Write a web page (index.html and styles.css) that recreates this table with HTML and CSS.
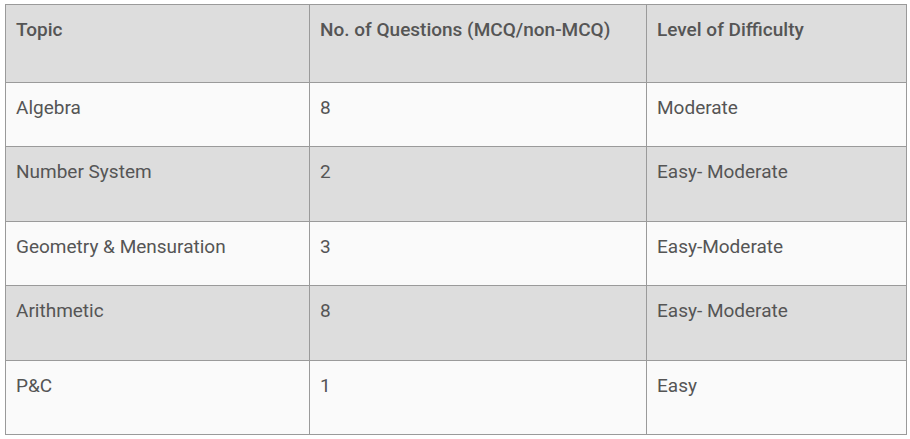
FILE: index.html
```html
<!DOCTYPE html>
<html lang="en">
<head>
<meta charset="utf-8">
<title>Topic table</title>
<link rel="stylesheet" href="styles.css">
</head>
<body>
<table class="topics">
  <colgroup>
    <col class="c1"><col class="c2"><col class="c3">
  </colgroup>
  <thead>
    <tr class="r-head"><th>Topic</th><th>No. of Questions (MCQ/non-MCQ)</th><th>Level of Difficulty</th></tr>
  </thead>
  <tbody>
    <tr class="r-light r-short"><td>Algebra</td><td>8</td><td>Moderate</td></tr>
    <tr class="r-dark r-tall"><td>Number System</td><td>2</td><td>Easy- Moderate</td></tr>
    <tr class="r-light r-short"><td>Geometry &amp; Mensuration</td><td>3</td><td>Easy-Moderate</td></tr>
    <tr class="r-dark r-tall"><td>Arithmetic</td><td>8</td><td>Easy- Moderate</td></tr>
    <tr class="r-light r-last"><td>P&amp;C</td><td>1</td><td>Easy</td></tr>
  </tbody>
</table>
</body>
</html>
```

FILE: styles.css
```css
html, body {
  margin: 0;
  padding: 0;
  background: #ffffff;
}

body {
  padding: 4px 0 0 5px;
  font-family: Roboto, "Liberation Sans", Arial, sans-serif;
  color: #555555;
}

.topics {
  border-collapse: collapse;
  width: 901px;
  table-layout: fixed;
  font-size: 19px;
  line-height: 24px;
}

.c1 { width: 304px; }
.c2 { width: 337px; }
.c3 { width: 260px; }

.topics th,
.topics td {
  border: 1px solid #9a9a9a;
  padding: 13px 10px 0 10px;
  vertical-align: top;
  text-align: left;
}

.topics th {
  font-weight: 500;
  color: #555555;
}

.r-head { height: 78px; background: #dddddd; }
.r-dark { background: #dddddd; }
.r-light { background: #fafafa; }
.r-short { height: 64px; }
.r-tall { height: 75px; }
.r-last { height: 74px; }
```
